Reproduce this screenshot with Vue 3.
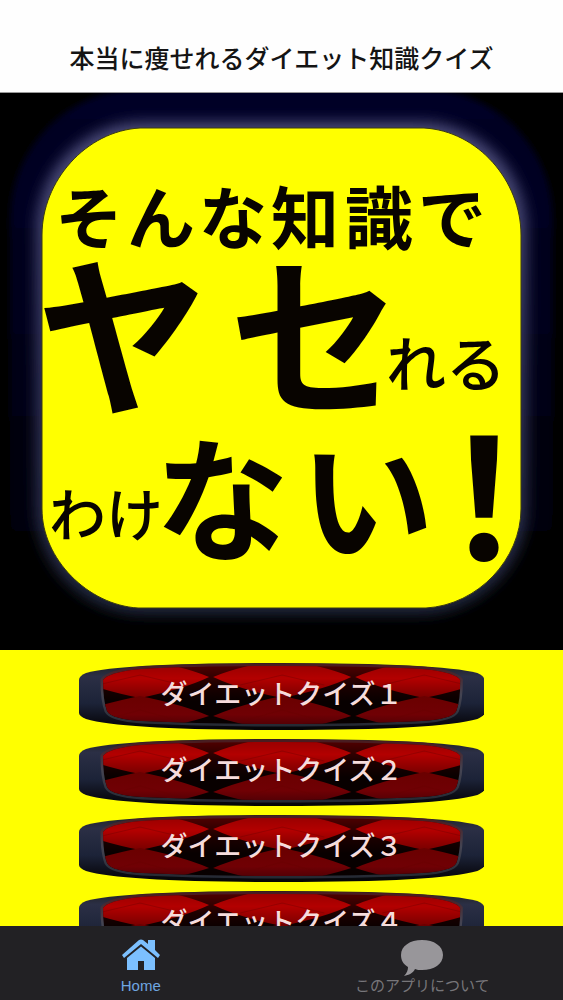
<script setup>
import { ref } from 'vue'

const quizzes = ['ダイエットクイズ１', 'ダイエットクイズ２', 'ダイエットクイズ３', 'ダイエットクイズ４']
const columns = [61, 203, 345]
const active = ref('home')
</script>

<template>
  <div class="app">
    <header class="header">
      <h1>本当に痩せれるダイエット知識クイズ</h1>
    </header>

    <main class="content">
      <svg class="hero" viewBox="0 0 563 557" role="img" aria-label="そんな知識でヤセれるわけない！">
        <defs>
          <linearGradient id="haloFill" x1="0" y1="0" x2="0" y2="1">
            <stop offset="0" stop-color="#020226" />
            <stop offset="0.4" stop-color="#01011c" />
            <stop offset="0.85" stop-color="#000004" />
            <stop offset="1" stop-color="#000" />
          </linearGradient>
          <linearGradient id="glowFill" x1="0" y1="0" x2="0" y2="1">
            <stop offset="0" stop-color="#4c4c7a" />
            <stop offset="0.5" stop-color="#34365c" />
            <stop offset="1" stop-color="#222840" />
          </linearGradient>
          <filter id="soft" x="-10%" y="-10%" width="120%" height="120%">
            <feGaussianBlur stdDeviation="7" />
          </filter>
          <filter id="edge" x="-10%" y="-10%" width="120%" height="120%">
            <feGaussianBlur stdDeviation="3" />
          </filter>
        </defs>
        <rect width="563" height="557" fill="#000" />
        <rect x="10" y="-4" width="543" height="552" rx="130" fill="url(#haloFill)" filter="url(#edge)" />
        <rect x="36" y="29" width="491" height="492" rx="108" fill="url(#glowFill)" filter="url(#soft)" />
        <path
          d="M140 35H424C478 38 521 88 521 142V416C521 466 478 512 426 515H138C88 512 42 466 42 416V142C42 88 86 38 140 35Z"
          fill="#ff0" stroke="#3a3a10" stroke-width="1"
        />
        <g class="slogan">
          <text x="55 127 199 271 345 418" y="151" font-size="68">そんな知識で</text>
          <text x="36 229" y="309" font-size="172">ヤセ</text>
          <text x="386 446" y="294" font-size="60" class="light">れる</text>
          <text x="49" y="443" font-size="57" class="light">わけ</text>
          <text x="155 300" y="458" font-size="134">ない</text>
          <text x="401" y="467" font-size="166">！</text>
        </g>
      </svg>

      <section class="quizzes">
        <button v-for="quiz in quizzes" :key="quiz" type="button" class="quiz">
          <svg class="plate" viewBox="0 0 405 67" preserveAspectRatio="none" aria-hidden="true">
            <defs>
              <linearGradient id="frame" x1="0" y1="0" x2="0" y2="1">
                <stop offset="0" stop-color="#202020" />
                <stop offset="0.2" stop-color="#2b2f45" />
                <stop offset="0.6" stop-color="#1c2338" />
                <stop offset="0.85" stop-color="#0c0d16" />
                <stop offset="1" stop-color="#050505" />
              </linearGradient>
              <linearGradient id="rim" x1="0" y1="0" x2="0" y2="1">
                <stop offset="0" stop-color="#4a1c20" />
                <stop offset="0.5" stop-color="#444452" />
                <stop offset="1" stop-color="#262a34" />
              </linearGradient>
              <linearGradient id="base" x1="0" y1="0" x2="0" y2="1">
                <stop offset="0" stop-color="#560000" />
                <stop offset="0.35" stop-color="#1c0000" />
                <stop offset="0.6" stop-color="#080000" />
                <stop offset="1" stop-color="#080000" />
              </linearGradient>
              <linearGradient id="redTop" x1="0" y1="0" x2="0" y2="1">
                <stop offset="0" stop-color="#8e0000" />
                <stop offset="0.5" stop-color="#b30000" />
                <stop offset="1" stop-color="#780000" />
              </linearGradient>
              <linearGradient id="redLow" x1="0" y1="0" x2="0" y2="1">
                <stop offset="0" stop-color="#6a0000" />
                <stop offset="0.5" stop-color="#700004" />
                <stop offset="1" stop-color="#3c0006" />
              </linearGradient>
              <clipPath id="window">
                <path d="M24 17Q30 9 62 6Q120 3 202 3Q285 3 343 6Q375 9 381 17Q381 38 377 48Q373 56 342 58Q280 61 202 61Q125 61 63 58Q32 56 28 48Q24 38 24 17Z" />
              </clipPath>
            </defs>
            <path d="M0 17Q0 13 7 10Q45 0 202 0Q360 0 398 10Q405 13 405 17V50Q405 53 398 56Q360 67 202 67Q45 67 7 56Q0 53 0 50Z" fill="url(#frame)" />
            <path d="M24 17Q30 9 62 6Q120 3 202 3Q285 3 343 6Q375 9 381 17Q381 38 377 48Q373 56 342 58Q280 61 202 61Q125 61 63 58Q32 56 28 48Q24 38 24 17Z" fill="none" stroke="url(#rim)" stroke-width="5" />
            <g clip-path="url(#window)">
              <rect x="20" width="366" height="64" fill="url(#base)" />
              <template v-for="x in columns" :key="x">
                <path :d="`M${x - 69} 14Q${x - 46} 4 ${x} -4Q${x + 46} 4 ${x + 69} 14Q${x + 44} 26 ${x} 35Q${x - 44} 26 ${x - 69} 14Z`" fill="url(#redTop)" />
                <path :d="`M${x - 69} 53Q${x - 44} 42 ${x} 33Q${x + 44} 42 ${x + 69} 53Q${x + 44} 61 ${x} 70Q${x - 44} 61 ${x - 69} 53Z`" fill="url(#redLow)" />
                <path :d="`M${x - 42} 22L${x} 12L${x + 42} 22M${x - 40} 58L${x} 47L${x + 40} 58`" fill="none" stroke="#600" stroke-opacity="0.35" />
              </template>
            </g>
          </svg>
          <span class="quiz-label">{{ quiz }}</span>
        </button>
      </section>
    </main>

    <nav class="tabs">
      <button type="button" class="tab" :class="{ active: active === 'home' }" @click="active = 'home'">
        <svg width="38" height="32" viewBox="0 0 38 32" fill="currentColor" aria-hidden="true">
          <path d="M0 16L17 1Q19 0 21 1L26 5V1H33V11L38 16L36 19L19 5L2 19Z" />
          <path d="M5 19L19 7.500L33 19V31H22V22H16V31H5Z" />
        </svg>
        <span>Home</span>
      </button>
      <button type="button" class="tab" :class="{ active: active === 'about' }" @click="active = 'about'">
        <svg width="44" height="38" viewBox="0 0 44 38" fill="currentColor" aria-hidden="true">
          <path d="M22 1C34 1 43 7 43 16C43 25 34 31 22 31C19 31 17 31 15 30C13 34 9 36 4 37C7 34 8 31 8 28C3 25 1 21 1 16C1 7 10 1 22 1Z" />
        </svg>
        <span>このアプリについて</span>
      </button>
    </nav>
  </div>
</template>

<style>
body {
  background: #222124;
}
</style>

<style scoped>
.app {
  display: flex;
  flex-direction: column;
  height: 100vh;
  font-family: "Liberation Sans", "Noto Sans CJK JP", sans-serif;
}

.header {
  flex: none;
  box-sizing: border-box;
  padding: 41px 16px 15px;
  background: #fefefe;
  border-bottom: 1px solid #999;
}

h1 {
  margin: 0;
  color: #141414;
  font-size: 25px;
  font-weight: 500;
  line-height: 36px;
  text-align: center;
}

.content {
  flex: 1;
  min-height: 0;
  overflow-y: auto;
  scrollbar-width: none;
  background: #ff0;
}

.hero {
  display: block;
  width: 100%;
}

.slogan {
  fill: #080400;
  font-family: "Noto Sans CJK JP", sans-serif;
  font-weight: 700;
}

.slogan .light {
  font-weight: 500;
}

.quizzes {
  display: flex;
  flex-direction: column;
  align-items: center;
  gap: 9px;
  padding: 13px 0 16px;
}

.quiz {
  display: grid;
  width: 72%;
  height: 67px;
  padding: 0;
  border: 0;
  background: none;
  color: #f6dcdc;
  font-family: inherit;
  cursor: pointer;
}

.plate,
.quiz-label {
  grid-area: 1 / 1;
}

.plate {
  width: 100%;
  height: 67px;
}

.quiz-label {
  align-self: center;
  font-size: 27px;
  font-weight: 500;
  line-height: 40px;
  padding-bottom: 4px;
  white-space: nowrap;
}

.tabs {
  flex: none;
  display: flex;
  height: 74px;
  background: #222124;
}

.tab {
  flex: 1;
  display: flex;
  flex-direction: column;
  align-items: center;
  justify-content: space-between;
  padding: 13px 0 5px;
  border: 0;
  background: none;
  color: #98969a;
  font-family: inherit;
  font-size: 15px;
  line-height: 18px;
  cursor: pointer;
}

.tab span {
  color: #77767a;
}

.tab.active {
  color: #7cc0ff;
}

.tab.active span {
  color: #6fa6e0;
}
</style>
